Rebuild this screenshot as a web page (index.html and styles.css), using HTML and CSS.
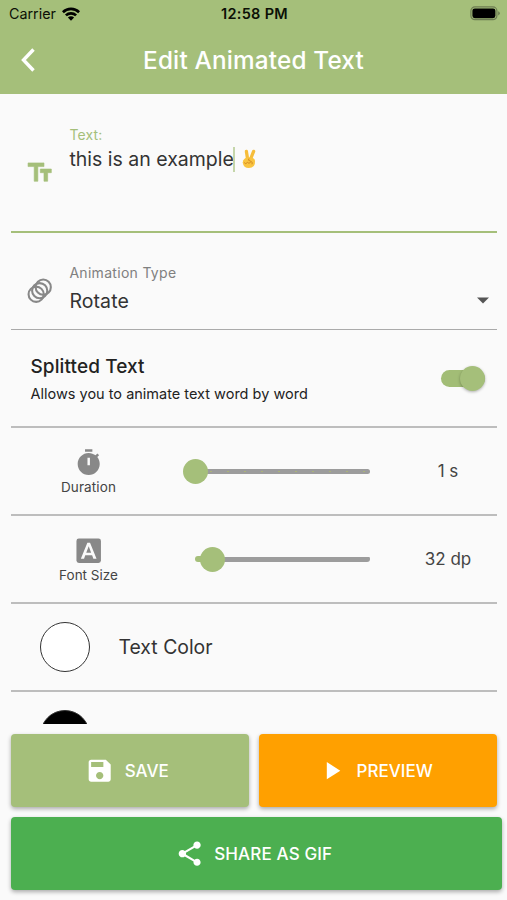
FILE: index.html
```html
<!DOCTYPE html>
<html lang="en">
<head>
<meta charset="utf-8">
<title>Edit Animated Text</title>
<link rel="stylesheet" href="styles.css">
</head>
<body>
<div class="screen">
  <header class="top">
    <div class="status">
      <div class="carrier"><span>Carrier</span>
        <svg class="wifi" viewBox="0 0 18 14"><g fill="none" stroke="#000" stroke-width="2.7"><path d="M.9 5.2a11.6 11.6 0 0 1 16.2 0"/><path d="M3.9 8.4a7.3 7.3 0 0 1 10.2 0"/></g><path d="M9 13.8 5.900 10.600a4.400 4.400 0 0 1 6.200 0z"/></svg>
      </div>
      <span class="clock">12:58 PM</span>
      <svg class="battery" viewBox="0 0 30 15"><rect x=".9" y=".9" width="26" height="12.8" rx="4" fill="none" stroke="#6d7d52" stroke-width="1.2"/><rect x="2.4" y="2.4" width="23" height="9.8" rx="2.4"/><path d="M28.2 5.2v4.2q1.6-.6 1.6-2.1t-1.6-2.1z" fill="#6d7d52"/></svg>
    </div>
    <div class="bar">
      <svg class="back" viewBox="0 0 16 26"><path d="M13.500 2.500 3.500 13l10 10.500" fill="none" stroke="#fff" stroke-width="3.4"/></svg>
      <h1>Edit Animated Text</h1>
    </div>
  </header>
  <main class="list">
    <section class="row field">
      <svg class="icon" viewBox="0 0 24 24" fill="#a5bf7a"><path d="M2.500 4v3h5v12h3V7h5V4h-13zm19 5h-9v3h3v7h3v-7h3V9z" stroke="#a5bf7a" stroke-width=".5"/></svg>
      <div class="entry">
        <label class="hint">Text:</label>
        <div class="value"><span>this is an example</span><i class="caret"></i>
          <svg class="hand" viewBox="0 0 16 20" role="img" aria-label="victory hand"><g fill="none" stroke="#f6bd3a" stroke-width="3.3" stroke-linecap="round"><path d="M6.6 10 5.4 2.4"/><path d="m9.6 10 3-7.6"/></g><path d="M2.3 11.2Q4 8.2 8 8.2q5.600 0 6 3.500.5 7.300-6.200 7.300-5.300 0-6.100-5.600z" fill="#f9c440"/><path d="M3.200 13.600q1.600 2.300 3.200-.2 1.500 2 3.400-.4M8 9.500q-1.800 2.100 1.800 2.800 2.300.8 1.200 3" fill="none" stroke="#d58b22" stroke-width="1"/></svg>
        </div>
      </div>
    </section>
    <section class="row type">
      <svg class="icon" viewBox="0 0 24 24" fill="none" stroke="#888" stroke-width="1.700"><circle cx="14.900" cy="9.100" r="6.200"/><circle cx="12" cy="12" r="6.200"/><circle cx="9.100" cy="14.900" r="6.200"/></svg>
      <div class="entry">
        <div class="hint">Animation Type</div>
        <div class="value">Rotate</div>
      </div>
      <svg class="arrow" viewBox="0 0 12 7"><path d="M0 .4h12l-6 6z" fill="#555"/></svg>
    </section>
    <section class="row split">
      <div>
        <h2>Splitted Text</h2>
        <p>Allows you to animate text word by word</p>
      </div>
      <div class="switch"><i class="knob"></i></div>
    </section>
    <section class="row slide">
      <div class="label">
        <svg class="icon" viewBox="0 0 24 24" fill="#888"><path d="M15 1H9v2h6V1zm4.030 6.390 1.420-1.420c-.43-.51-.9-.99-1.410-1.410l-1.420 1.420C16.070 4.740 14.120 4 12 4c-4.970 0-9 4.030-9 9s4.020 9 9 9 9-4.030 9-9c0-2.120-.74-4.070-1.970-5.610zM13 14h-2V8h2v6z"/></svg>
        <span class="duration">Duration</span>
      </div>
      <div class="slider ticks"><i class="thumb"></i></div>
      <div class="amount">1 s</div>
    </section>
    <section class="row slide">
      <div class="label">
        <svg class="icon" viewBox="0 0 24 24" fill="#888"><rect x="2" y="2" width="20" height="20" rx="2"/><path d="M10.900 5.600 5.600 18.500h2.600l1-2.700h5.600l1 2.700h2.600L13.100 5.600h-2.200zm-.9 8L12 8.300l2 5.300z" fill="#fafafa" fill-rule="evenodd"/></svg>
        <span class="size">Font Size</span>
      </div>
      <div class="slider filled"><i class="thumb second"></i></div>
      <div class="amount">32 dp</div>
    </section>
    <section class="row color"><i class="swatch white"></i><span>Text Color</span></section>
    <section class="row color"><i class="swatch black"></i></section>
  </main>
  <footer class="actions">
    <div class="pair">
      <div class="btn save"><svg class="icon" viewBox="0 0 24 24" fill="#fff"><path d="M17 3H5c-1.110 0-2 .9-2 2v14c0 1.100.89 2 2 2h14c1.100 0 2-.9 2-2V7l-4-4zm-5 16c-1.660 0-3-1.340-3-3s1.340-3 3-3 3 1.340 3 3-1.340 3-3 3zm3-10H5V5h10v4z"/></svg><span>SAVE</span></div>
      <div class="btn preview"><svg class="icon" viewBox="0 0 24 24" fill="#fff"><path d="M8 5v14l11-7z"/></svg><span>PREVIEW</span></div>
    </div>
    <div class="btn share"><svg class="icon" viewBox="0 0 24 24" fill="#fff"><path d="M18 16.080c-.76 0-1.440.3-1.960.77L8.910 12.700c.05-.23.09-.46.09-.7s-.04-.47-.09-.7l7.050-4.110c.54.5 1.250.81 2.040.81 1.660 0 3-1.340 3-3s-1.340-3-3-3-3 1.340-3 3c0 .24.04.47.09.7L8.040 9.810C7.500 9.310 6.790 9 6 9c-1.660 0-3 1.340-3 3s1.340 3 3 3c.79 0 1.500-.31 2.040-.81l7.120 4.160c-.05.21-.08.43-.08.65 0 1.610 1.310 2.920 2.920 2.920s2.920-1.310 2.920-2.920-1.310-2.920-2.920-2.920z"/></svg><span>SHARE AS GIF</span></div>
  </footer>
</div>
</body>
</html>
```
FILE: styles.css
```css
* { box-sizing: border-box; margin: 0; padding: 0; }
body { background: #fafafa; font-family: Inter, "Liberation Sans", sans-serif; color: #333; }
svg { display: block; flex: none; }
.screen { width: 507px; height: 900px; overflow: hidden; display: flex; flex-direction: column; }

.top { height: 94px; background: #a5bf7a; flex: none; }
.status { height: 27px; display: grid; grid-template-columns: 1fr auto 1fr; align-items: center; padding: 0 7px 0 9px; color: #0c1006; }
.carrier { display: flex; align-items: center; gap: 6px; font-size: 14.300px; line-height: 20px; }
.wifi { width: 18px; height: 14px; }
.clock { font-size: 14.500px; font-weight: 600; line-height: 20px; letter-spacing: .3px; }
.battery { width: 30px; height: 15px; justify-self: end; }
.bar { height: 65px; display: grid; grid-template-columns: 36px 1fr 36px; align-items: center; }
.back { width: 16px; height: 26px; justify-self: end; margin-top: 1px; }
.bar h1 { text-align: center; color: #fff; font-size: 24.300px; font-weight: 500; line-height: 30px; letter-spacing: .180px; }

.list { height: 630px; flex: none; overflow: hidden; padding: 0 10px 0 11px; }
.row { display: flex; border-bottom: 2px solid #bdbdbd; height: 88px; align-items: center; }
.icon { width: 29.400px; height: 29.400px; }
.entry { flex: 1; margin-left: 15px; }
.hint { display: block; font-size: 14px; line-height: 18px; color: #808080; letter-spacing: .3px; }
.value { display: flex; align-items: center; font-size: 19.500px; line-height: 26px; height: 26px; }
.field { height: 139px; border-color: #a5bf7a; padding-left: 14px; align-items: flex-start; }
.field .icon { margin-top: 64px; }
.field .entry { margin-top: 32px; }
.field .hint { color: #a5bf7a; letter-spacing: .15px; }
.field .value { margin-top: 2px; }
.caret { width: 2px; height: 25px; background: #c5d6aa; margin-left: -1px; }
.hand { width: 16px; height: 20px; margin-left: 6px; }
.type { height: 97px; padding: 0 8px 0 14px; border-bottom-width: 1px; border-color: #aaa; align-items: flex-start; }
.type .icon { margin-top: 43px; }
.type .entry { margin-top: 31px; }
.type .value { margin-top: 6px; letter-spacing: .1px; }
.arrow { width: 12px; height: 7px; margin-top: 64px; }
.split { height: 98px; padding: 0 12px 0 19.500px; justify-content: space-between; }
.split h2 { font-size: 19px; font-weight: 500; line-height: 26px; color: #222; letter-spacing: .1px; margin-top: 1px; }
.split p { font-size: 14.500px; line-height: 20px; margin-top: 4px; color: #222; }
.switch { width: 44px; height: 17px; display: flex; align-items: center; justify-content: flex-end; background: #a2bd76; border-radius: 9px; }
.knob { width: 25px; height: 25px; flex: none; border-radius: 50%; background: #a5bf7a; box-shadow: 0 1px 3px rgba(0,0,0,.3); }
.label { width: 154px; display: flex; flex-direction: column; align-items: center; font-size: 13.500px; line-height: 18px; color: #444; padding: 2px 0 0 1px; }
.label span { margin-top: 1px; }
.duration { letter-spacing: .1px; }
.slider { width: 175px; height: 5px; margin-left: 30px; border-radius: 3px; background: #9c9c9c; display: flex; align-items: center; }
.ticks { background: repeating-linear-gradient(90deg, transparent 0 15px, #aab477 15px 17px) center / 100% 1px no-repeat, #9c9c9c; }
.thumb { width: 25px; height: 25px; border-radius: 50%; background: #a5bf7a; margin-left: -12px; flex: none; }
.second { margin-left: 5px; }
.filled { height: 6px; background: linear-gradient(90deg, #a5bf7a 10px, transparent 10px), linear-gradient(#9c9c9c, #9c9c9c) center / 100% 5px no-repeat; }
.amount { flex: 1; text-align: center; font-size: 17px; line-height: 22px; color: #444; padding-left: 29px; }
.color { padding-left: 28.500px; font-size: 19.400px; gap: 29px; }
.swatch { width: 50px; height: 50px; border-radius: 50%; border: 1.500px solid #333; }
.white { background: #fff; }
.black { background: #000; }

.actions { padding: 10px 5px 0 11px; display: flex; flex-direction: column; gap: 10px; }
.pair { display: flex; gap: 10px; margin-right: 5px; }
.btn { height: 73px; display: flex; align-items: center; justify-content: center; gap: 10px; padding-right: 6px; border-radius: 4px; color: #fff; font-size: 17px; font-weight: 500; box-shadow: 0 2px 4px rgba(0,0,0,.32); }
.pair .btn { flex: 1 1 0; }
.save { background: #a5bf7a; }
.preview { background: #ffa000; }
.share { background: #4caf50; letter-spacing: .150px; }
```
